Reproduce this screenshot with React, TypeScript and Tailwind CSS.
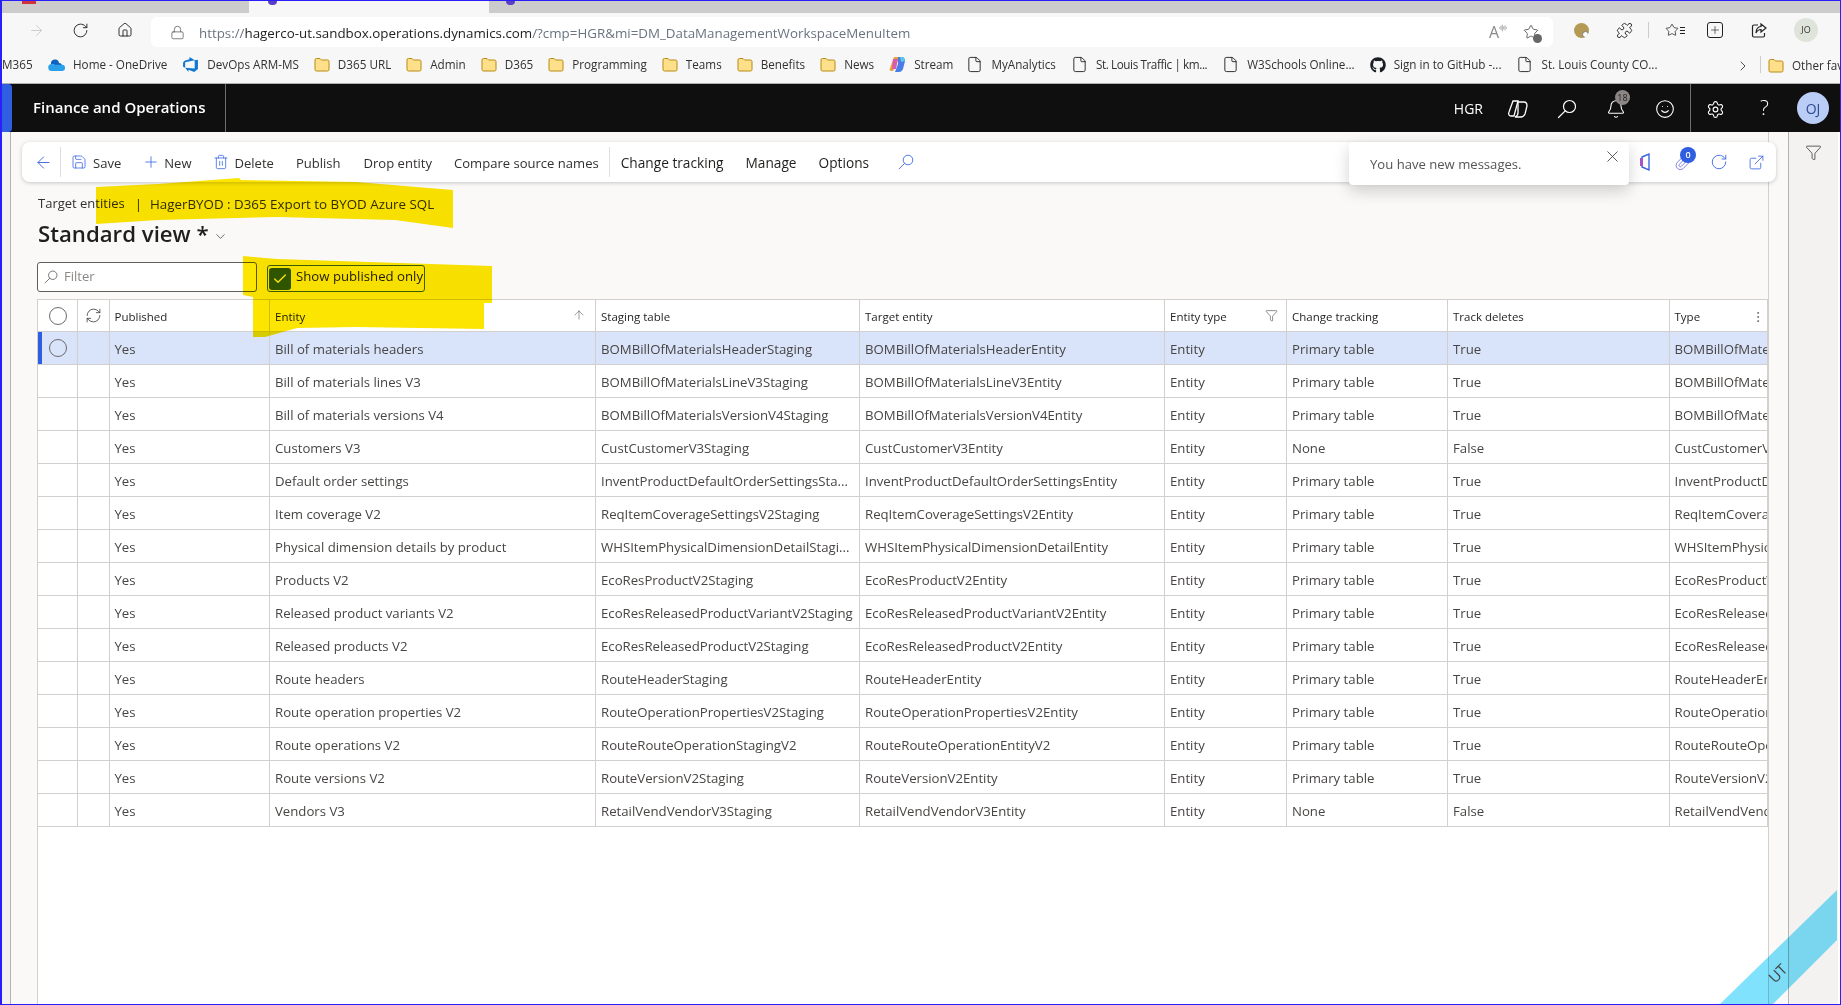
import React from "react";
import { ArrowLeft, ArrowRight, ArrowUp, Bell, Check, ChevronDown, ChevronRight, ExternalLink, File, Funnel, House, Lock, MoreVertical, Paperclip, Plus, Puzzle, RefreshCw, RotateCw, Save, Settings, Smile, Star, Trash2, X, AudioLines } from "lucide-react";
import { FaGithub } from "react-icons/fa";
import { VscAzureDevops } from "react-icons/vsc";

const font = { fontFamily: '"Open Sans", "Liberation Sans", sans-serif' };

const Glass = ({ size, sw = 1.2, className = "" }: { size: number; sw?: number; className?: string }) => (
  <svg width={size} height={size} viewBox="0 0 20 20" fill="none" stroke="currentColor" strokeWidth={sw} className={`shrink-0 ${className}`}>
    <circle cx="12.5" cy="7.5" r="6" />
    <path d="M8.2 11.8 L1.5 18.5" strokeLinecap="round" />
  </svg>
);

const FolderIcon = () => (
  <svg width="16" height="15" viewBox="0 0 16 15" className="shrink-0">
    <path d="M1 3a1.5 1.5 0 0 1 1.5-1.5h3.5l1.5 1.5h6a1.5 1.5 0 0 1 1.5 1.5v8A1.5 1.5 0 0 1 13.5 14h-11A1.5 1.5 0 0 1 1 12.5z" fill="#ffe08a" stroke="#b98a12" strokeWidth="1" />
  </svg>
);
const DocIcon = () => <File size={17} strokeWidth={1.3} className="shrink-0 text-[#222]" />;
const OneDrive = () => (
  <svg width="17" height="12" viewBox="0 0 17 12" className="shrink-0">
    <path d="M3 5a4 4 0 0 1 8-1 3 3 0 0 1 3 2H7z" fill="#0c64c0" />
    <path d="M4 12a3.5 3.5 0 0 1-.5-7l3.5.8h7a3 3 0 0 1 3 3 3 3 0 0 1-3 3.2z" fill="#2aa0ea" />
  </svg>
);
const CopilotMark = () => (
  <svg width="17" height="17" viewBox="0 0 17 17" className="shrink-0">
    <path d="M5 1h5L7 9 4 15H2C1 15 0 14 1 12z" fill="#e8a23d" />
    <path d="M4 3h5l-2 10H3z" fill="#d85cae" />
    <path d="M9 1h4c2 0 3 2 3 4l-2 8c-1 2-2 3-4 3H6l3-8z" fill="#4a7ce8" />
    <path d="M11 1h2c2 0 3 2 3 4l-4 1z" fill="#5ac8e6" />
  </svg>
);

type BM = { icon: React.ReactNode; text: string; cls?: string };
const bookmarks: BM[] = [
  { icon: <OneDrive />, text: "Home - OneDrive" },
  { icon: <VscAzureDevops size={17} className="shrink-0 text-[#0f78d4]" />, text: "DevOps ARM-MS" },
  { icon: <FolderIcon />, text: "D365 URL" },
  { icon: <FolderIcon />, text: "Admin" },
  { icon: <FolderIcon />, text: "D365" },
  { icon: <FolderIcon />, text: "Programming" },
  { icon: <FolderIcon />, text: "Teams" },
  { icon: <FolderIcon />, text: "Benefits" },
  { icon: <FolderIcon />, text: "News" },
  { icon: <CopilotMark />, text: "Stream", cls: "mr-[-2px]" },
  { icon: <DocIcon />, text: "MyAnalytics" },
  { icon: <DocIcon />, text: "St. Louis Traffic | km...", cls: "tracking-[-0.4px]" },
  { icon: <DocIcon />, text: "W3Schools Online..." },
  { icon: <FaGithub size={16} className="shrink-0 text-[#1b1f23]" />, text: "Sign in to GitHub -..." },
  { icon: <DocIcon />, text: "St. Louis County CO..." },
];

const rows = [
  ["Bill of materials headers", "BOMBillOfMaterialsHeaderStaging", "BOMBillOfMaterialsHeaderEntity", "Primary table", "True"],
  ["Bill of materials lines V3", "BOMBillOfMaterialsLineV3Staging", "BOMBillOfMaterialsLineV3Entity", "Primary table", "True"],
  ["Bill of materials versions V4", "BOMBillOfMaterialsVersionV4Staging", "BOMBillOfMaterialsVersionV4Entity", "Primary table", "True"],
  ["Customers V3", "CustCustomerV3Staging", "CustCustomerV3Entity", "None", "False"],
  ["Default order settings", "InventProductDefaultOrderSettingsSta...", "InventProductDefaultOrderSettingsEntity", "Primary table", "True"],
  ["Item coverage V2", "ReqItemCoverageSettingsV2Staging", "ReqItemCoverageSettingsV2Entity", "Primary table", "True"],
  ["Physical dimension details by product", "WHSItemPhysicalDimensionDetailStagi...", "WHSItemPhysicalDimensionDetailEntity", "Primary table", "True"],
  ["Products V2", "EcoResProductV2Staging", "EcoResProductV2Entity", "Primary table", "True"],
  ["Released product variants V2", "EcoResReleasedProductVariantV2Staging", "EcoResReleasedProductVariantV2Entity", "Primary table", "True"],
  ["Released products V2", "EcoResReleasedProductV2Staging", "EcoResReleasedProductV2Entity", "Primary table", "True"],
  ["Route headers", "RouteHeaderStaging", "RouteHeaderEntity", "Primary table", "True"],
  ["Route operation properties V2", "RouteOperationPropertiesV2Staging", "RouteOperationPropertiesV2Entity", "Primary table", "True"],
  ["Route operations V2", "RouteRouteOperationStagingV2", "RouteRouteOperationEntityV2", "Primary table", "True"],
  ["Route versions V2", "RouteVersionV2Staging", "RouteVersionV2Entity", "Primary table", "True"],
  ["Vendors V3", "RetailVendVendorV3Staging", "RetailVendVendorV3Entity", "None", "False"],
];

const gridCols = "grid grid-cols-[39.5px_32px_160.5px_326px_264px_305px_122px_161px_221.5px_98.5px]";
const cellB = "border-r border-b border-[#d2d0ce] flex items-center overflow-hidden whitespace-nowrap";
const hCell = `${cellB} pl-[5px] pt-[2px]`;
const bCell = `${cellB} pl-[5px] pt-[4px]`;

const Radio = () => <span className="block w-[18px] h-[18px] rounded-full border border-[#6b6b6b]" />;

const Cmd = ({ children, cls = "" }: { children: React.ReactNode; cls?: string }) => (
  <span className={`text-[#323130] whitespace-nowrap ${cls}`}>{children}</span>
);

const blue = "text-[#3b66e3]";

export default function App() {
  return (
    <div style={font} className="relative w-[1841px] h-[1005px] overflow-hidden bg-white border border-l-2 border-[#2a1ffb] flex flex-col">
      {/* tab strip */}
      <div className="h-[12px] shrink-0 bg-[#cccccc] flex">
        <div className="w-[247px] h-full rounded-br-md flex pl-[20px]">
          <span className="w-[14px] h-[3px] bg-[#d13438]" />
        </div>
        <div className="w-[240px] h-full bg-[#f7f7f7] pl-[19px]">
          <span className="block w-[9px] h-[4px] bg-[#5b3fc4] rounded-b-full" />
        </div>
        <div className="pl-[17px]">
          <span className="block w-[9px] h-[4px] bg-[#5b3fc4] rounded-b-full" />
        </div>
      </div>
      {/* address row */}
      <div className="h-[34px] shrink-0 bg-[#f7f7f7] flex items-end">
        <div className="w-[149px] h-[34px] flex items-center shrink-0">
          <ArrowRight size={17} strokeWidth={1.2} className="ml-[26px] text-[#c8c8c8]" />
          <RotateCw size={17} strokeWidth={1.3} className="ml-[27px] text-[#222]" />
          <House size={16} strokeWidth={1.4} className="ml-[28px] text-[#222]" />
        </div>
        <div className="w-[1402px] h-[30px] bg-white rounded-md flex items-center shrink-0">
          <Lock size={15} strokeWidth={1.2} className="ml-[19px] text-[#555]" />
          <span className="ml-[14px] mt-[2px] text-[13.35px] whitespace-nowrap text-[#6a7480]">
            https://<span className="text-[#222]">hagerco-ut.sandbox.operations.dynamics.com</span>/?cmp=HGR&amp;mi=DM_DataManagementWorkspaceMenuItem
          </span>
          <span className="ml-auto flex items-center">
            <span className="text-[16px] text-[#8a8a8a]">A</span>
            <AudioLines size={8} className="text-[#8a8a8a] mb-2" />
            <span className="relative ml-[16px] mr-[14px] block">
              <Star size={16} strokeWidth={1.2} className="text-[#444]" />
              <span className="absolute right-[-3px] bottom-[-3px] w-[9px] h-[9px] rounded-full bg-[#666]" />
            </span>
          </span>
        </div>
        <div className="flex-1 h-[34px] flex items-center">
          <span className="ml-[21px] relative w-[15px] h-[15px] rounded-full bg-[#b49a55] overflow-hidden">
            <span className="absolute right-0 bottom-0 w-[7px] h-[7px] rounded-full bg-white border border-[#777]" />
          </span>
          <Puzzle size={17} strokeWidth={1.3} className="ml-[27px] text-[#222]" />
          <span className="ml-[15px] w-px h-[16px] bg-[#ccc]" />
          <Star size={14} strokeWidth={1.3} className="ml-[16px] text-[#222]" />
          <span className="flex flex-col gap-[2px] ml-[1px]">
            <span className="block w-[5px] h-px bg-[#222]" />
            <span className="block w-[5px] h-px bg-[#222]" />
            <span className="block w-[5px] h-px bg-[#222]" />
          </span>
          <span className="ml-[22px] relative w-[16px] h-[16px] rounded-[3px] border border-[#222]">
            <Plus size={12} strokeWidth={1.3} className="absolute left-[1px] top-[1px] text-[#222]" />
          </span>
          <svg width="17" height="17" viewBox="0 0 17 17" fill="none" stroke="#222" strokeWidth="1.2" className="ml-[28px] shrink-0">
            <path d="M7 3H3a1.5 1.5 0 0 0-1.5 1.5v9A1.5 1.5 0 0 0 3 15h9a1.5 1.5 0 0 0 1.5-1.5V11" />
            <path d="M10 2l5 4-5 4V7.5C7.5 7.5 6 9 5 11c0-4 2-6.5 5-6.5z" />
          </svg>
          <span className="ml-[26px] w-[24px] h-[24px] rounded-full bg-[#dfe4da] flex items-center justify-center text-[9px] text-[#333]">JO</span>
        </div>
      </div>
      {/* bookmarks */}
      <div className="h-[37px] shrink-0 bg-[#f7f7f7] border-b border-[#b0b0b0] flex items-center text-[11.7px] text-[#323130] whitespace-nowrap">
        <span className="w-[29px] shrink-0">M365</span>
        <div className="flex items-center gap-[15px] ml-[17px]">
          {bookmarks.map((b) => (
            <span key={b.text} className={`flex items-center gap-[8px] ${b.cls ?? ""}`}>
              {b.icon}
              <span className="block overflow-hidden">{b.text}</span>
            </span>
          ))}
        </div>
        <ChevronRight size={16} strokeWidth={1.3} className="absolute left-[1733px] top-[57px] text-[#333]" />
        <span className="absolute left-[1758px] top-[55px] w-px h-[17px] bg-[#ccc]" />
        <span className="absolute left-[1766px] top-[56px] flex items-center gap-[8px]"><FolderIcon />Other fav</span>
      </div>
      {/* app header */}
      <div className="h-[48px] shrink-0 bg-[#0f0f0f] flex items-center text-white">
        <span className="w-[10px] h-full bg-[#2f5fe0] rounded-tr-sm rounded-br-sm" />
        <span className="ml-[21px] mb-[2px] text-[15px] font-semibold whitespace-nowrap">Finance and Operations</span>
        <span className="ml-[20px] w-px h-full bg-[#6e6e6e]" />
        <span className="ml-auto text-[14px]">HGR</span>
        <span className="ml-[10px] w-[49px] flex justify-center mt-[2px]">
          <svg width="22" height="20" viewBox="0 0 22 20" fill="none" stroke="white" strokeWidth="1.3">
            <path d="M6 2h5L7 17H4c-2 0-3-2-2-4z" />
            <path d="M11 3h6c2 0 3 2 3 4l-2 8c-1 2-2 3-4 3H8c2-1 3-2 3-4z" />
          </svg>
        </span>
        <span className="w-[49px] flex justify-center mt-[2px]"><Glass size={20} /></span>
        <span className="relative w-[49px] flex justify-center mt-[2px]">
          <Bell size={20} strokeWidth={1.3} />
          <span className="absolute left-[24px] top-[-9px] w-[15px] h-[15px] rounded-full bg-[#8c8784] flex items-center justify-center text-[9px] text-[#222]">18</span>
        </span>
        <span className="w-[49px] flex justify-center mt-[2px]"><Smile size={20} strokeWidth={1.3} /></span>
        <span className="ml-[1px] w-px h-full bg-[#6e6e6e]" />
        <span className="w-[49px] flex justify-center mt-[2px]"><Settings size={19} strokeWidth={1.4} /></span>
        <span className="w-[49px] flex justify-center text-[21px] font-light">?</span>
        <span className="ml-[8px] mr-[11px] w-[32px] h-[32px] rounded-full bg-[#b9cdf7] flex items-center justify-center text-[14px] text-[#2c4a8c]">OJ</span>
      </div>
      {/* body */}
      <div className="flex-1 min-h-0 flex bg-[#faf9f8]">
        <div className="w-[9px] shrink-0 bg-[#f3f2f1] border-r border-[#b5b3b1]" />
        <div className="flex-1 min-w-0 flex flex-col relative">
          {/* command bar */}
          <div className="mt-[10px] ml-[11px] w-[1754px] h-[40px] shrink-0 bg-white rounded-lg shadow-[0_1px_4px_rgba(0,0,0,0.2)] flex items-center text-[13.05px]">
            <ArrowLeft size={19} strokeWidth={1.2} className={`ml-[12px] ${blue}`} />
            <span className="ml-[7px] w-px h-[30px] bg-[#e1dfdd]" />
            <Save size={16} strokeWidth={1.2} className={`ml-[10px] ${blue}`} />
            <Cmd cls="ml-[6px] mt-[3px]">Save</Cmd>
            <Plus size={18} strokeWidth={1.1} className={`ml-[21px] ${blue}`} />
            <Cmd cls="ml-[4px] mt-[3px]">New</Cmd>
            <Trash2 size={16} strokeWidth={1.2} className={`ml-[21px] ${blue}`} />
            <Cmd cls="ml-[6px] mt-[3px]">Delete</Cmd>
            <Cmd cls="ml-[22px] mt-[3px]">Publish</Cmd>
            <Cmd cls="ml-[23px] mt-[3px]">Drop entity</Cmd>
            <Cmd cls="ml-[22px] mt-[3px]">Compare source names</Cmd>
            <span className="ml-[10px] w-px h-[30px] bg-[#e1dfdd]" />
            <Cmd cls="ml-[11px] mt-[3px] text-[13.7px] font-medium !text-[#201f1e]">Change tracking</Cmd>
            <Cmd cls="ml-[22px] mt-[3px] text-[13.7px] font-medium !text-[#201f1e]">Manage</Cmd>
            <Cmd cls="ml-[22px] mt-[3px] text-[13.7px] font-medium !text-[#201f1e]">Options</Cmd>
            <Glass size={16} sw={1.1} className={`ml-[29px] ${blue}`} />
            <span className="ml-auto flex items-center">
              <svg width="14" height="18" viewBox="0 0 14 18" fill="none" className="mr-[21px]">
                <path d="M3 4l7-3v16l-7-3z" stroke="#3b66e3" strokeWidth="1.4" />
                <path d="M1 5h3v8H1z" fill="#a855c8" />
              </svg>
              <span className="relative mr-[19px]">
                <Paperclip size={17} strokeWidth={1.2} className="text-[#6a6ae0]" />
                <span className="absolute left-[6px] top-[-7px] w-[16px] h-[16px] rounded-full bg-[#2f5fe0] text-white text-[9px] font-semibold flex items-center justify-center">0</span>
              </span>
              <RotateCw size={18} strokeWidth={1.2} className={`mr-[20px] ${blue}`} />
              <ExternalLink size={17} strokeWidth={1.2} className={`mr-[11px] ${blue}`} />
            </span>
          </div>
          {/* notification */}
          <div className="absolute left-[1338px] top-[10px] w-[280px] h-[43px] bg-white rounded-sm shadow-[0_6px_16px_rgba(0,0,0,0.18)] flex items-center z-10">
            <span className="ml-[21px] mt-[2px] text-[13.1px] text-[#555]">You have new messages.</span>
            <X size={19} strokeWidth={1} className="absolute right-[7px] top-[5px] text-[#333]" />
          </div>
          {/* breadcrumb */}
          <div className="ml-[27px] mt-[12px] h-[20px] flex items-center text-[13.35px] text-[#323130] whitespace-nowrap">
            <span className="text-[13px]">Target entities</span><span className="ml-[10px] mr-[8px]">|</span>HagerBYOD : D365 Export to BYOD Azure SQL
          </div>
          {/* title */}
          <div className="ml-[27px] mt-[3px] h-[34px] flex items-center whitespace-nowrap">
            <span className="text-[22.2px] font-semibold text-[#201f1e]">Standard view *</span>
            <ChevronDown size={15} strokeWidth={1.2} className="ml-[4px] mt-[4px] text-[#444]" />
          </div>
          {/* filter row */}
          <div className="ml-[26px] mt-[11px] h-[33px] flex items-start">
            <div className="w-[220px] h-[30px] bg-white border border-[#605e5c] rounded-[3px] flex items-center">
              <Glass size={14} sw={1.2} className="ml-[6px] text-[#605e5c]" />
              <span className="ml-[6px] text-[13px] text-[#8a8886]">Filter</span>
            </div>
            <div className="ml-[10px] mt-[3px] w-[158px] h-[27px] border border-[#3b66e3] rounded-[3px] flex items-center">
              <span className="ml-[1px] w-[22px] h-[22px] rounded-[3px] bg-[#2f5fe0] flex items-center justify-center">
                <Check size={16} strokeWidth={2} className="text-white" />
              </span>
              <span className="ml-[5px] mb-[3px] text-[13.2px] text-[#201f1e] whitespace-nowrap">Show published only</span>
            </div>
          </div>
          {/* grid */}
          <div className="ml-[26px] mt-[4px] w-[1731px] flex-1 min-h-0 bg-white border-l border-[#d2d0ce] relative">
            <div className={`${gridCols} h-[33px] border-t border-[#d2d0ce] text-[11.5px] font-medium text-[#201f1e]`}>
              <div className={`${cellB} justify-center pl-[1px]`}><Radio /></div>
              <div className={`${cellB} justify-center`}><RefreshCw size={17} strokeWidth={1.1} className="text-[#333]" /></div>
              <div className={hCell}>Published</div>
              <div className={`${hCell} justify-between`}>Entity<ArrowUp size={14} strokeWidth={1} className="mr-[9px] mb-[3px] text-[#555]" /></div>
              <div className={hCell}>Staging table</div>
              <div className={hCell}>Target entity</div>
              <div className={`${hCell} justify-between`}>Entity type<Funnel size={13} strokeWidth={1} className="mr-[8px] mb-[3px] text-[#333]" /></div>
              <div className={hCell}>Change tracking</div>
              <div className={hCell}>Track deletes</div>
              <div className={`${hCell} justify-between`}>Type<MoreVertical size={14} strokeWidth={1.2} className="mr-[2px] text-[#555]" /></div>
            </div>
            {rows.map((r, i) => {
              const sel = i === 0;
              return (
                <div key={r[0]} className={`${gridCols} h-[33px] text-[13.2px] text-[#484644] ${sel ? "bg-[#d9e3fa]" : ""}`}>
                  <div className={`${cellB} justify-center relative pl-[1px]`}>
                    {sel && <span className="absolute left-0 top-0 bottom-0 w-[4px] bg-[#2f5fe0]" />}
                    {sel && <Radio />}
                  </div>
                  <div className={cellB} />
                  <div className={bCell}>Yes</div>
                  <div className={bCell}>{r[0]}</div>
                  <div className={bCell}>{r[1]}</div>
                  <div className={bCell}>{r[2]}</div>
                  <div className={bCell}>Entity</div>
                  <div className={bCell}>{r[3]}</div>
                  <div className={bCell}>{r[4]}</div>
                  <div className={bCell}>{r[2]}</div>
                </div>
              );
            })}
          </div>
        </div>
        <div className="w-[20px] shrink-0 border-l border-[#d2d0ce]" />
        <div className="w-[50px] shrink-0 bg-[#f3f2f1] border-l border-[#b5b3b1] flex justify-center pt-[12px]">
          <Funnel size={17} strokeWidth={1.1} className="text-[#333]" />
        </div>
        <div className="w-[2px] shrink-0 bg-white" />
      </div>
      {/* yellow marker strokes and the environment ribbon */}
      <svg className="absolute left-[-2px] top-[-1px] w-[1841px] h-[1005px] mix-blend-multiply pointer-events-none z-20" viewBox="0 0 1841 1005">
        <path d="M96 187 L158 184 L239 178 L241 180 L356 182 L453 190 L453 228 L395 220 L277 217 L158 220 L96 224 Z" fill="#fce500" />
        <path d="M243 256 L277 259 L492 266 L492 303 L484 303 L484 329 L356 327 L297 328 L265 337 L253 337 L253 297 L243 295 Z" fill="#fce500" />
        <path d="M1837 890 L1837 940 L1773 1004 L1720 1004 Z" fill="#80e2fd" />
      </svg>
      <span className="absolute left-[1766px] top-[961px] text-[15px] text-[#444] -rotate-45 z-30">UT</span>
    </div>
  );
}
